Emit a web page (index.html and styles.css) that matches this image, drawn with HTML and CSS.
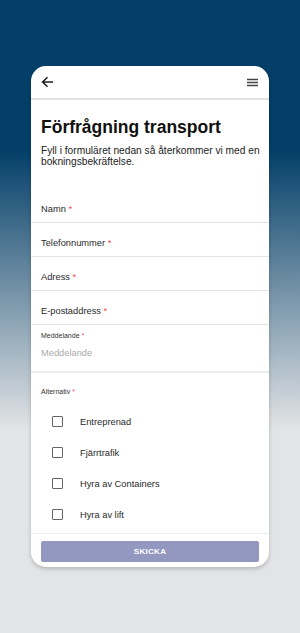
FILE: index.html
```html
<!DOCTYPE html>
<html lang="sv">
	<head>
		<meta charset="utf-8" />
		<title>Förfrågning transport</title>
		<link rel="stylesheet" href="styles.css">
	</head>
	<body>
		<div class="phone">
			<div class="topbar">
				<svg class="icon" width="13" height="12" viewBox="0 0 13 12">
					<path d="M12 6H1.8M6.5 1.2L1.6 6l4.9 4.8" fill="none" stroke="#222" stroke-width="1.6"/>
				</svg>
				<svg class="icon" width="11" height="9" viewBox="0 0 11 9">
					<path d="M0 1.5h11M0 4.5h11M0 7.5h11" fill="none" stroke="#444" stroke-width="1.3"/>
				</svg>
			</div>
			<div class="content">
				<h1 class="title">Förfrågning transport</h1>
				<p class="intro">Fyll i formuläret nedan så återkommer vi med en bokningsbekräftelse.</p>

				<div class="field">Namn <span class="req">*</span></div>
				<div class="field">Telefonnummer <span class="req">*</span></div>
				<div class="field">Adress <span class="req">*</span></div>
				<div class="field">E-postaddress <span class="req">*</span></div>
				<div class="field message">
					<div class="small">Meddelande <span class="req">*</span></div>
					<div class="placeholder">Meddelande</div>
				</div>

				<div class="options">
					<div class="small">Alternativ <span class="req">*</span></div>
					<div class="option"><span class="check"></span>Entreprenad</div>
					<div class="option"><span class="check"></span>Fjärrtrafik</div>
					<div class="option"><span class="check"></span>Hyra av Containers</div>
					<div class="option"><span class="check"></span>Hyra av lift</div>
				</div>
			</div>
			<div class="footer">
				<div class="send">SKICKA</div>
			</div>
		</div>
	</body>
</html>
```

FILE: styles.css
```css
body {
	margin: 0;
	height: 633px;
	overflow: hidden;
	font-family: "Liberation Sans", Arial, sans-serif;
	background: linear-gradient(#033f68 0, #033f68 150px, #e3e4e6 430px, #e3e4e6 100%);
}
.phone {
	margin: 66px 31px 0;
	height: 501px;
	background: #fff;
	border-radius: 15px;
	overflow: hidden;
	display: flex;
	flex-direction: column;
	box-shadow: 0 2px 4px rgba(0, 0, 0, 0.2);
}
.topbar {
	height: 32px;
	flex: none;
	display: flex;
	align-items: center;
	justify-content: space-between;
	padding: 0 11px 0 10px;
	border-bottom: 2px solid #e2e2e2;
}
.icon {
	display: block;
}
.content {
	flex: 1;
	overflow: hidden;
}
.title {
	margin: 17px 10px 0;
	font-size: 17.5px;
	line-height: 20px;
	color: #111;
}
.intro {
	margin: 8px 2px 0 10px;
	font-size: 10.2px;
	line-height: 11px;
	color: #222;
}
.field {
	padding: 14px 10px 6px;
	font-size: 9.3px;
	line-height: 13px;
	color: #2a2a2a;
	border-bottom: 1px solid #e4e4e4;
}
.intro + .field {
	margin-top: 22px;
}
.req {
	color: #e8505b;
}
.message {
	padding: 6px 10px 11px;
	border-bottom: 2px solid #ededed;
}
.small {
	font-size: 7px;
	line-height: 9px;
	color: #333;
}
.placeholder {
	margin-top: 7px;
	font-size: 9.3px;
	line-height: 13px;
	color: #aaa;
}
.options {
	padding: 14px 10px 0;
}
.option {
	display: flex;
	align-items: center;
	height: 31px;
	padding-left: 11px;
	font-size: 9.3px;
	color: #2a2a2a;
}
.options .small {
	margin-bottom: 10px;
}
.check {
	width: 9px;
	height: 9px;
	border: 1.5px solid #666;
	border-radius: 1px;
	margin-right: 17px;
}
.footer {
	flex: none;
	border-top: 1px solid #ececec;
	padding: 7px 10px 5px;
}
.send {
	height: 21px;
	line-height: 21px;
	background: #9398c0;
	border-radius: 2px;
	text-align: center;
	color: #fff;
	font-size: 8px;
	font-weight: bold;
	letter-spacing: 0.3px;
}
```
